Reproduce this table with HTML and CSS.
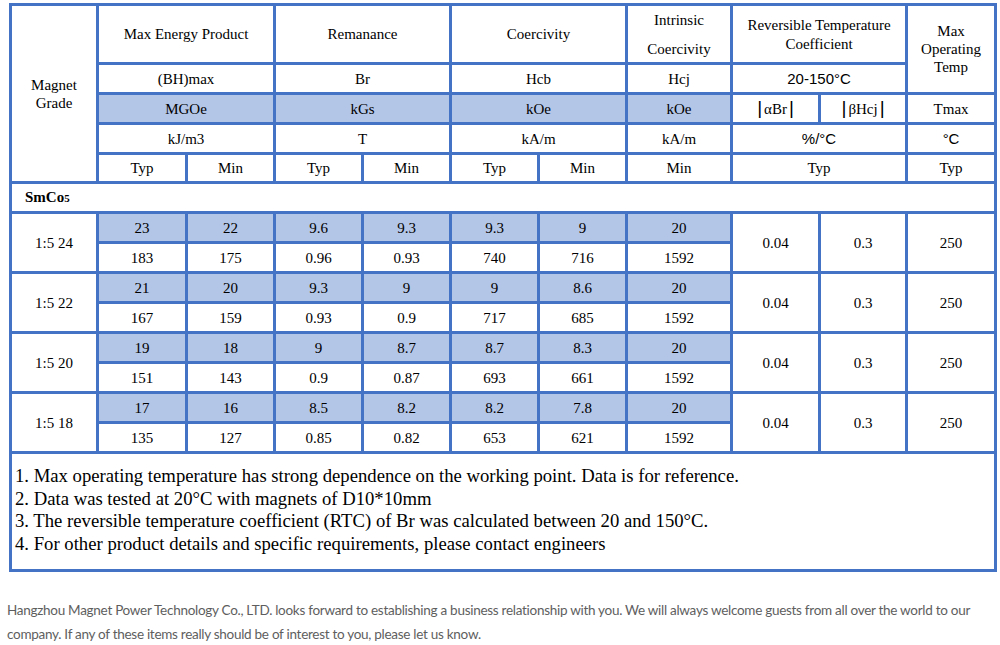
FILE: index.html
```html
<!DOCTYPE html>
<html lang="en">
<head>
<meta charset="utf-8">
<title>SmCo5 Magnet Grades</title>
<link rel="stylesheet" href="styles.css">
</head>
<body>
<div class="page">
  <table class="spec">
    <colgroup>
      <col class="c-grade">
      <col class="c89"><col class="c88"><col class="c88"><col class="c88"><col class="c88"><col class="c88">
      <col class="c105"><col class="c88"><col class="c87"><col class="c89">
    </colgroup>
    <tbody>
      <tr class="r-top">
        <td rowspan="5">Magnet<br>Grade</td>
        <td colspan="2">Max Energy Product</td>
        <td colspan="2">Remanance</td>
        <td colspan="2">Coercivity</td>
        <td class="tall"><span class="ln">Intrinsic</span><span class="ln">Coercivity</span></td>
        <td colspan="2" class="rtc">Reversible Temperature<br>Coefficient</td>
        <td rowspan="2" class="mot">Max<br>Operating<br>Temp</td>
      </tr>
      <tr>
        <td colspan="2">(BH)max</td>
        <td colspan="2">Br</td>
        <td colspan="2">Hcb</td>
        <td>Hcj</td>
        <td colspan="2" class="sans">20-150°C</td>
      </tr>
      <tr>
        <td colspan="2" class="sh">MGOe</td>
        <td colspan="2" class="sh">kGs</td>
        <td colspan="2" class="sh">kOe</td>
        <td class="sh">kOe</td>
        <td><span class="bar">|</span>αBr<span class="bar">|</span></td>
        <td><span class="bar">|</span>βHcj<span class="bar">|</span></td>
        <td>Tmax</td>
      </tr>
      <tr>
        <td colspan="2">kJ/m3</td>
        <td colspan="2">T</td>
        <td colspan="2">kA/m</td>
        <td>kA/m</td>
        <td colspan="2" class="sans">%/°C</td>
        <td class="sans">°C</td>
      </tr>
      <tr class="r-short">
        <td>Typ</td><td>Min</td><td>Typ</td><td>Min</td><td>Typ</td><td>Min</td><td>Min</td>
        <td colspan="2">Typ</td>
        <td>Typ</td>
      </tr>
      <tr>
        <td colspan="11" class="family">SmCo<span class="sub">5</span></td>
      </tr>

      <tr>
        <td rowspan="2">1:5 24</td>
        <td class="sh">23</td><td class="sh">22</td><td class="sh">9.6</td><td class="sh">9.3</td><td class="sh">9.3</td><td class="sh">9</td><td class="sh">20</td>
        <td rowspan="2">0.04</td><td rowspan="2">0.3</td><td rowspan="2">250</td>
      </tr>
      <tr>
        <td>183</td><td>175</td><td>0.96</td><td>0.93</td><td>740</td><td>716</td><td>1592</td>
      </tr>

      <tr>
        <td rowspan="2">1:5 22</td>
        <td class="sh">21</td><td class="sh">20</td><td class="sh">9.3</td><td class="sh">9</td><td class="sh">9</td><td class="sh">8.6</td><td class="sh">20</td>
        <td rowspan="2">0.04</td><td rowspan="2">0.3</td><td rowspan="2">250</td>
      </tr>
      <tr>
        <td>167</td><td>159</td><td>0.93</td><td>0.9</td><td>717</td><td>685</td><td>1592</td>
      </tr>

      <tr>
        <td rowspan="2">1:5 20</td>
        <td class="sh">19</td><td class="sh">18</td><td class="sh">9</td><td class="sh">8.7</td><td class="sh">8.7</td><td class="sh">8.3</td><td class="sh">20</td>
        <td rowspan="2">0.04</td><td rowspan="2">0.3</td><td rowspan="2">250</td>
      </tr>
      <tr>
        <td>151</td><td>143</td><td>0.9</td><td>0.87</td><td>693</td><td>661</td><td>1592</td>
      </tr>

      <tr>
        <td rowspan="2">1:5 18</td>
        <td class="sh">17</td><td class="sh">16</td><td class="sh">8.5</td><td class="sh">8.2</td><td class="sh">8.2</td><td class="sh">7.8</td><td class="sh">20</td>
        <td rowspan="2">0.04</td><td rowspan="2">0.3</td><td rowspan="2">250</td>
      </tr>
      <tr>
        <td>135</td><td>127</td><td>0.85</td><td>0.82</td><td>653</td><td>621</td><td>1592</td>
      </tr>

      <tr class="r-notes">
        <td colspan="11" class="notes">
          1. Max operating temperature has strong dependence on the working point. Data is for reference.<br>
          2. Data was tested at 20°C with magnets of D10*10mm<br>
          3. The reversible temperature coefficient (RTC) of Br was calculated between 20 and 150°C.<br>
          4. For other product details and specific requirements, please contact engineers
        </td>
      </tr>
    </tbody>
  </table>

  <p class="closing">Hangzhou Magnet Power Technology Co., LTD. looks forward to establishing a business relationship with you. We will always welcome guests from all over the world to our company. If any of these items really should be of interest to you, please let us know.</p>
</div>
</body>
</html>
```

FILE: styles.css
```css
html, body {
  margin: 0;
  padding: 0;
  background: #ffffff;
}

.page {
  padding: 3px 0 0 9px;
}

.spec {
  border-collapse: collapse;
  table-layout: fixed;
  width: 988px;
  border: 3px solid #4472c4;
  font-family: "Liberation Serif", "Times New Roman", serif;
  font-size: 15px;
  color: #000;
}

.c-grade { width: 87px; }
.c89 { width: 89px; }
.c88 { width: 88px; }
.c87 { width: 87px; }
.c105 { width: 105px; }

.spec td {
  border: 3px solid #4472c4;
  padding: 0;
  text-align: center;
  vertical-align: middle;
  line-height: 18px;
}

.spec tr {
  height: 30px;
}

.spec tr.r-top {
  height: 59px;
}

.spec tr.r-short {
  height: 29px;
}

.spec td.tall .ln {
  display: block;
}

.spec td.tall .ln + .ln {
  margin-top: 11px;
}

.spec td.rtc {
  line-height: 19px;
  padding-top: 1px;
}

.spec td.mot {
  line-height: 18px;
  padding-bottom: 1px;
}

.spec td.sh {
  background: #b4c6e7;
}

.spec td.sans {
  font-family: "Liberation Sans", Arial, sans-serif;
  font-size: 15px;
}

.bar {
  font-family: "Liberation Sans", Arial, sans-serif;
  font-size: 19px;
  padding: 0 2px;
}

.spec td.family {
  text-align: left;
  padding-left: 13px;
  font-weight: bold;
}

.sub {
  font-size: 11px;
}

.spec tr.r-notes {
  height: 118px;
}

.spec td.notes {
  text-align: left;
  vertical-align: top;
  padding: 11px 3px 0 3px;
  font-size: 18.7px;
  line-height: 22.7px;
}

.closing {
  margin: 26px 0 0 -2px;
  width: 990px;
  font-family: Lato, "Open Sans", sans-serif;
  font-size: 13.5px;
  letter-spacing: -0.28px;
  line-height: 24px;
  color: #5e5e5e;
}
```
